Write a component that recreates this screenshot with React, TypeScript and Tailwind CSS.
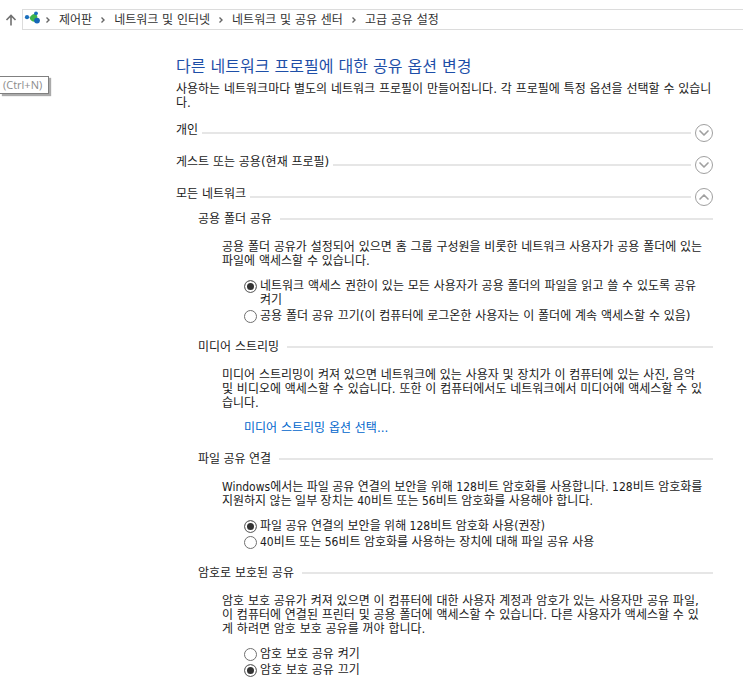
import React, { useState } from 'react';
import { ChevronDown, ChevronUp } from 'lucide-react';

type Option = { id: string; label: string };

type Section = {
  id: string;
  title: string;
  body: string;
  latin?: boolean;
  options?: Option[];
  link?: string;
};

const crumbs = ['제어판', '네트워크 및 인터넷', '네트워크 및 공유 센터', '고급 공유 설정'];

const sections: Section[] = [
  {
    id: 'public-folder',
    title: '공용 폴더 공유',
    body: '공용 폴더 공유가 설정되어 있으면 홈 그룹 구성원을 비롯한 네트워크 사용자가 공용 폴더에 있는\n파일에 액세스할 수 있습니다.',
    options: [
      { id: 'public-on', label: '네트워크 액세스 권한이 있는 모든 사용자가 공용 폴더의 파일을 읽고 쓸 수 있도록 공유\n켜기' },
      { id: 'public-off', label: '공용 폴더 공유 끄기(이 컴퓨터에 로그온한 사용자는 이 폴더에 계속 액세스할 수 있음)' },
    ],
  },
  {
    id: 'media',
    title: '미디어 스트리밍',
    body: '미디어 스트리밍이 켜져 있으면 네트워크에 있는 사용자 및 장치가 이 컴퓨터에 있는 사진, 음악\n및 비디오에 액세스할 수 있습니다. 또한 이 컴퓨터에서도 네트워크에서 미디어에 액세스할 수 있\n습니다.',
    link: '미디어 스트리밍 옵션 선택...',
  },
  {
    id: 'encryption',
    title: '파일 공유 연결',
    latin: true,
    body: 'Windows에서는 파일 공유 연결의 보안을 위해 128비트 암호화를 사용합니다. 128비트 암호화를\n지원하지 않는 일부 장치는 40비트 또는 56비트 암호화를 사용해야 합니다.',
    options: [
      { id: 'bit-128', label: '파일 공유 연결의 보안을 위해 128비트 암호화 사용(권장)' },
      { id: 'bit-40', label: '40비트 또는 56비트 암호화를 사용하는 장치에 대해 파일 공유 사용' },
    ],
  },
  {
    id: 'password',
    title: '암호로 보호된 공유',
    body: '암호 보호 공유가 켜져 있으면 이 컴퓨터에 대한 사용자 계정과 암호가 있는 사용자만 공유 파일,\n이 컴퓨터에 연결된 프린터 및 공용 폴더에 액세스할 수 있습니다. 다른 사용자가 액세스할 수 있\n게 하려면 암호 보호 공유를 꺼야 합니다.',
    options: [
      { id: 'password-on', label: '암호 보호 공유 켜기' },
      { id: 'password-off', label: '암호 보호 공유 끄기' },
    ],
  },
];

function NetworkIcon() {
  return (
    <svg width="17" height="17" viewBox="0 0 17 17" className="-mr-1 shrink-0" aria-hidden="true">
      <path d="M3 6.2h5M10 6.5l2-4" stroke="#8fc3e0" strokeWidth="1" />
      <path d="M5.8 7.2C6.4 4.6 9 2.6 11.4 3.2c1.8.5 2.2 2.4 1.8 4l-1.6 3.2c-2 .9-5.2-.6-5.8-3.2z" fill="#3fb54c" />
      <circle cx="3" cy="6.2" r="2.1" fill="#1a6fbe" />
      <circle cx="12" cy="2.3" r="1.9" fill="#1a6fbe" />
      <circle cx="13" cy="9.6" r="2.9" fill="#1667b7" />
    </svg>
  );
}

function AddressBar() {
  return (
    <header className="flex h-[21px] mt-[9px]">
      <button aria-label="위로" className="flex w-[22px] items-center justify-center text-[#707070]">
        <svg width="12" height="12" viewBox="0 0 12 12" fill="none" stroke="currentColor" strokeWidth="1.6" aria-hidden="true">
          <path d="M6 11.5V1.5M1.5 6 6 1.5 10.5 6" />
        </svg>
      </button>
      <nav className="flex flex-1 items-center border border-r-0 border-[#dcdcdc] pl-px text-[#333]">
        <NetworkIcon />
        {crumbs.map((crumb) => (
          <React.Fragment key={crumb}>
            <svg width="22" height="8" viewBox="0 0 22 8" fill="none" stroke="#666" strokeWidth="1.4" className="shrink-0" aria-hidden="true">
              <path d="M9.5 1.5 12 4 9.5 6.5" />
            </svg>
            <a href="#" className="whitespace-nowrap">{crumb}</a>
          </React.Fragment>
        ))}
      </nav>
    </header>
  );
}

function ProfileRow({ title, open, onToggle }: { title: string; open: boolean; onToggle: () => void }) {
  const Icon = open ? ChevronUp : ChevronDown;
  return (
    <button onClick={onToggle} aria-expanded={open} className="flex h-5 w-full items-center text-left">
      <span className="pb-1.5">{title}</span>
      <span className="ml-1 mr-1 h-0.5 flex-1 bg-[#e6e6e6]" />
      <span className="flex size-[18px] items-center justify-center rounded-full border border-[#a0a0a0] text-[#a0a0a0]">
        <Icon className="size-4" strokeWidth={2.5} />
      </span>
    </button>
  );
}

function SharingSection({ section, value, onChange }: { section: Section; value?: string; onChange: (id: string) => void }) {
  return (
    <section className={section.latin ? "font-['DejaVu_Sans_Condensed','Noto_Sans_CJK_KR',sans-serif]" : ''}>
      <div className="flex items-center gap-2">
        <h2>{section.title}</h2>
        <span className="h-0.5 flex-1 bg-[#e6e6e6]" />
      </div>
      <p className="mt-3.5 ml-6 whitespace-pre-line">{section.body}</p>
      {section.options && (
        <div role="radiogroup" aria-label={section.title} className="mt-[11px] ml-[46px] flex flex-col gap-0.5">
          {section.options.map((option) => (
            <label key={option.id} className="flex items-start gap-[3px]">
              <input
                type="radio"
                name={section.id}
                checked={value === option.id}
                onChange={() => onChange(option.id)}
                className="mt-px size-[13px] shrink-0 appearance-none rounded-full border border-[#707070] bg-white checked:bg-[#333] checked:shadow-[inset_0_0_0_2px_#fff]"
              />
              <span className="whitespace-pre-line">{option.label}</span>
            </label>
          ))}
        </div>
      )}
      {section.link && (
        <a href="#" className="mt-[11px] ml-[46px] block text-[#0066cc]">{section.link}</a>
      )}
    </section>
  );
}

function App() {
  const [open, setOpen] = useState({ personal: false, guest: false, all: true });
  const [values, setValues] = useState<Record<string, string>>({
    'public-folder': 'public-on',
    encryption: 'bit-128',
    password: 'password-off',
  });

  return (
    <div className="relative min-h-screen overflow-x-hidden bg-white font-['DejaVu_Sans','Noto_Sans_CJK_KR',sans-serif] text-[12px] leading-[14px] text-[#1a1a1a]">
      <AddressBar />

      <div
        role="tooltip"
        className="absolute top-[76px] left-0 border border-l-0 border-[#808080] bg-white pr-1.5 pl-[3px] font-['Open_Sans',sans-serif] text-[11px] leading-4 text-[#8c8c8c] shadow-[2px_2px_1px_#aaa]"
      >
        (Ctrl+N)
      </div>

      <main className="mt-[27px] mr-[30px] ml-44">
        <h1 className="text-[16px] leading-5 text-[#1e4fa8]">다른 네트워크 프로필에 대한 공유 옵션 변경</h1>
        <p className="mt-[5px] whitespace-pre-line">
          {'사용하는 네트워크마다 별도의 네트워크 프로필이 만들어집니다. 각 프로필에 특정 옵션을 선택할 수 있습니\n다.'}
        </p>

        <div className="mt-[13px] flex flex-col gap-3">
          <ProfileRow title="개인" open={open.personal} onToggle={() => setOpen({ ...open, personal: !open.personal })} />
          <ProfileRow title="게스트 또는 공용(현재 프로필)" open={open.guest} onToggle={() => setOpen({ ...open, guest: !open.guest })} />
          <ProfileRow title="모든 네트워크" open={open.all} onToggle={() => setOpen({ ...open, all: !open.all })} />
        </div>

        {open.all && (
          <div className="mt-[5px] ml-[22px] flex flex-col gap-[17px]">
            {sections.map((section) => (
              <SharingSection
                key={section.id}
                section={section}
                value={values[section.id]}
                onChange={(id) => setValues({ ...values, [section.id]: id })}
              />
            ))}
          </div>
        )}
      </main>
    </div>
  );
}

export default App;
